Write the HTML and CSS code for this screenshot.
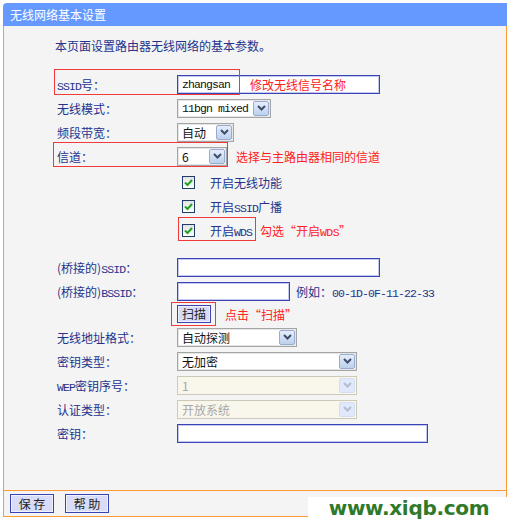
FILE: index.html
```html
<!DOCTYPE html>
<html lang="zh-CN">
<head>
<meta charset="UTF-8">
<title>无线网络基本设置</title>
<link rel="stylesheet" href="styles.css">
</head>
<body>

<div class="page">
    <div class="title">无线网络基本设置</div>

    <div class="panel">
        <p class="intro">本页面设置路由器无线网络的基本参数。</p>

        <div class="row row-first">
            <span class="hl hl-ssid"></span>
            <span class="label"><span class="mono">SSID</span>号：</span>
            <div class="field w-ssid">
                <span class="mono">zhangsan</span>
                <span class="note note-in">修改无线信号名称</span>
            </div>
        </div>
        <div class="row">
            <span class="label">无线模式：</span>
            <div class="select w-mode">
                <span class="txt mono">11bgn mixed</span>
                <span class="sel-btn"><svg width="9" height="6" viewBox="0 0 9 6"><polyline points="1,1 4.5,4.5 8,1"/></svg></span>
            </div>
        </div>
        <div class="row">
            <span class="label">频段带宽：</span>
            <div class="select w-bw">
                <span class="txt">自动</span>
                <span class="sel-btn"><svg width="9" height="6" viewBox="0 0 9 6"><polyline points="1,1 4.5,4.5 8,1"/></svg></span>
            </div>
        </div>
        <div class="row">
            <span class="hl hl-ch"></span>
            <span class="label">信道：</span>
            <div class="select w-ch">
                <span class="txt">6</span>
                <span class="sel-btn"><svg width="9" height="6" viewBox="0 0 9 6"><polyline points="1,1 4.5,4.5 8,1"/></svg></span>
            </div>
            <span class="note">选择与主路由器相同的信道</span>
        </div>

        <div class="checks">
            <div class="row">
                <span class="label"></span>
                <span class="chk"><svg width="11" height="11" viewBox="0 0 11 11"><polyline points="2,5.5 4.5,8 9,3"/></svg></span>
                <span>开启无线功能</span>
            </div>
            <div class="row">
                <span class="label"></span>
                <span class="chk"><svg width="11" height="11" viewBox="0 0 11 11"><polyline points="2,5.5 4.5,8 9,3"/></svg></span>
                <span>开启<span class="mono">SSID</span>广播</span>
            </div>
            <div class="row">
                <span class="hl hl-wds"></span>
                <span class="label"></span>
                <span class="chk"><svg width="11" height="11" viewBox="0 0 11 11"><polyline points="2,5.5 4.5,8 9,3"/></svg></span>
                <span>开启<span class="mono">WDS</span></span>
                <span class="note note-wds">勾选“开启<span class="mono">WDS</span>”</span>
            </div>
        </div>

        <div class="wds">
            <div class="row">
                <span class="label">(桥接的)<span class="mono">SSID</span>：</span>
                <div class="field w-ssid"></div>
            </div>
            <div class="row">
                <span class="label">(桥接的)<span class="mono">BSSID</span>：</span>
                <div class="field w-bssid"></div>
                <span class="example">例如：<span class="mono">00-1D-0F-11-22-33</span></span>
            </div>
            <div class="row row-scan">
                <span class="hl hl-scan"></span>
                <span class="label"></span>
                <button class="btn btn-scan">扫描</button>
                <span class="note note-scan">点击“扫描”</span>
            </div>
            <div class="row">
                <span class="label">无线地址格式：</span>
                <div class="select w-addr">
                    <span class="txt">自动探测</span>
                    <span class="sel-btn"><svg width="9" height="6" viewBox="0 0 9 6"><polyline points="1,1 4.5,4.5 8,1"/></svg></span>
                </div>
            </div>
            <div class="row">
                <span class="label">密钥类型：</span>
                <div class="select w-key">
                    <span class="txt">无加密</span>
                    <span class="sel-btn"><svg width="9" height="6" viewBox="0 0 9 6"><polyline points="1,1 4.5,4.5 8,1"/></svg></span>
                </div>
            </div>
            <div class="row">
                <span class="label"><span class="mono">WEP</span>密钥序号：</span>
                <div class="select w-key off">
                    <span class="txt">1</span>
                    <span class="sel-btn"><svg width="9" height="6" viewBox="0 0 9 6"><polyline points="1,1 4.5,4.5 8,1"/></svg></span>
                </div>
            </div>
            <div class="row">
                <span class="label">认证类型：</span>
                <div class="select w-key off">
                    <span class="txt">开放系统</span>
                    <span class="sel-btn"><svg width="9" height="6" viewBox="0 0 9 6"><polyline points="1,1 4.5,4.5 8,1"/></svg></span>
                </div>
            </div>
            <div class="row">
                <span class="label">密钥：</span>
                <div class="field w-pass"></div>
            </div>
        </div>
    </div>

    <div class="footer">
        <button class="btn btn-foot">保 存</button>
        <button class="btn btn-foot">帮 助</button>
    </div>
</div>

<div class="watermark">www.xiqb.com</div>

</body>
</html>
```

FILE: styles.css
```css
body { margin:0; background:#fff; font-family:"Noto Sans CJK SC", "Noto Sans", sans-serif; font-size:12px; color:#24338c; }

.page { margin:3px 0 0 3px; width:504px; }

.title { height:23px; line-height:23px; padding-left:7px; background:#6699ff; color:#fff; border-radius:4px 0 0 0; }

.panel { height:464px; background:#f4f4f4; border-left:1px solid #ff9933; border-right:1px solid #ff9933; border-bottom:1px solid #ff9933; }

.intro { margin:0; padding:12px 0 0 51px; line-height:16px; }

.row { position:relative; display:flex; align-items:center; height:24px; padding-left:53px; }
.row-first { margin-top:18px; }
.label { width:120px; flex-shrink:0; white-space:nowrap; }

.mono { font-family:"Liberation Mono", monospace; font-size:11.5px; letter-spacing:-0.9px; }

/* text fields */
.field { box-sizing:border-box; height:19px; display:flex; align-items:center; padding-left:4px; background:#fff; border:1px solid #3a44b4; box-shadow:inset 0 0 0 1px #c3c8ef; color:#111; }
.w-ssid { width:203px; }
.w-bssid { width:113px; }
.w-pass { width:251px; }

/* select boxes */
.select { box-sizing:border-box; height:19px; display:flex; align-items:center; background:#fff; border:1px solid #a5a5a5; box-shadow:inset 0 0 0 1px #e6e6e6; color:#111; }
.select .txt { flex:1; padding-left:4px; white-space:nowrap; overflow:hidden; }
.sel-btn { box-sizing:border-box; width:16px; height:15px; margin-right:1px; display:flex; align-items:center; justify-content:center; border:1px solid #98acd2; border-radius:2px; background:linear-gradient(#e6eefb, #bcd0ec); }
.sel-btn svg { fill:none; stroke:#3f4d6c; stroke-width:2; }
.select.off { background:#f9f7ec; border-color:#cbc9ba; box-shadow:none; color:#a8a8a8; }
.select.off .sel-btn { border-color:#d3dff1; background:#dfe9fb; }
.select.off .sel-btn svg { stroke:#b4bccb; }
.w-mode { width:94px; }
.w-bw { width:57px; }
.w-ch { width:50px; }
.w-addr { width:120px; }
.w-key { width:180px; }

/* checkboxes */
.checks { margin-top:2px; }
.chk { box-sizing:border-box; width:13px; height:13px; margin:0 15px 0 5px; display:flex; align-items:center; justify-content:center; border:1px solid #1f3d6b; background:linear-gradient(#e4e4e4, #fff); }
.chk svg { fill:none; stroke:#1fa31f; stroke-width:2; }

.wds { margin-top:13px; }
.row-scan { height:22px; }

/* red annotations */
.note { color:#ff2020; margin-left:9px; white-space:nowrap; }
.note-in { margin-left:20px; }
.note-wds { margin-left:8px; }
.note-scan { margin-left:14px; }
.note .mono { letter-spacing:-0.6px; }
.hl { position:absolute; border:1px solid #f03a3a; }
.hl-ssid { left:50px; top:-3px; width:184px; height:24px; }
.hl-ch { left:49px; top:-2px; width:173px; height:23px; }
.hl-wds { left:174px; top:-1px; width:76px; height:22px; }
.hl-scan { left:167px; top:-1px; width:43px; height:22px; }

.example { margin-left:6px; white-space:nowrap; }

/* buttons */
.btn { box-sizing:border-box; height:18px; padding:0; font-family:inherit; font-size:12px; line-height:14px; color:#222; background:#d8dcf6; border:1px solid #3a44b4; box-shadow:inset 0 0 0 1px #eef0fc; }
.btn-scan { width:34px; }

.footer { height:25px; display:flex; align-items:center; gap:11px; padding-left:6px; background:#f4f4f4; border-left:1px solid #ff9933; border-right:1px solid #ff9933; border-bottom:1px solid #ff9933; }
.btn-foot { width:44px; height:19px; }

.watermark { position:absolute; left:308px; top:497px; width:202px; height:23px; background:#fff; color:#2f7a2a; font-family:"DejaVu Sans", sans-serif; font-weight:bold; font-size:20px; line-height:22px; letter-spacing:-0.3px; text-align:center; }
```
